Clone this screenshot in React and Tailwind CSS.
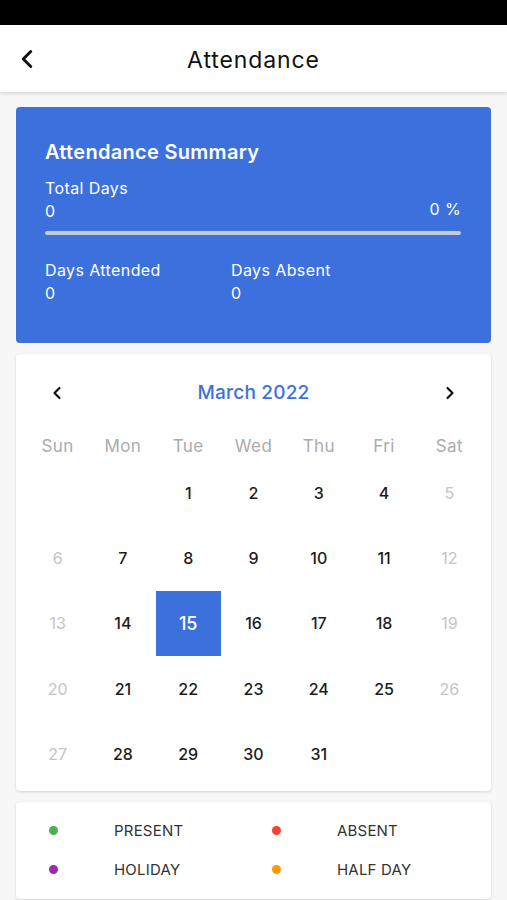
import React from 'react';
import { ChevronLeft, ChevronRight } from 'lucide-react';

const weekdays = ['Sun', 'Mon', 'Tue', 'Wed', 'Thu', 'Fri', 'Sat'];

// March 2022 starts on a Tuesday
const cells = [
  null, null, 1, 2, 3, 4, 5,
  6, 7, 8, 9, 10, 11, 12,
  13, 14, 15, 16, 17, 18, 19,
  20, 21, 22, 23, 24, 25, 26,
  27, 28, 29, 30, 31, null, null,
];

const legend = [
  { label: 'PRESENT', dot: 'bg-[#4caf50]' },
  { label: 'ABSENT', dot: 'bg-[#f44336]' },
  { label: 'HOLIDAY', dot: 'bg-[#9c27b0]' },
  { label: 'HALF DAY', dot: 'bg-[#ff9800]' },
];

export default function App() {
  return (
    <div className="w-[507px] h-[900px] overflow-hidden bg-[#f7f7f7] font-['Inter','Noto_Sans',sans-serif]">
      {/* status bar */}
      <div className="h-[25px] bg-black" />

      {/* header */}
      <div className="relative h-[67px] bg-white flex items-center justify-center shadow-[0_2px_3px_rgba(0,0,0,0.12)]">
        <button className="absolute left-[12px] top-1/2 -translate-y-1/2 text-[#111]">
          <ChevronLeft size={30} strokeWidth={2.3} />
        </button>
        <h1 className="pt-[3px] text-[23px] text-[#111] tracking-[0.9px]">Attendance</h1>
      </div>

      <div className="px-4">
        {/* summary */}
        <div className="mt-[15px] rounded-[4px] bg-[#3c71dd] text-white pt-[32px] pb-[40px] pl-[29px] pr-[30px] tracking-[0.4px]">
          <div className="text-[20px] leading-[26px] font-semibold tracking-[0.3px]">Attendance Summary</div>
          <div className="mt-[13px] text-[16px] leading-[20px]">Total Days</div>
          <div className="mt-[3px] flex items-start justify-between text-[16px] leading-[20px]">
            <span>0</span>
            <span className="-mt-[2px]">0 %</span>
          </div>
          <div className="mt-[10px] h-[4px] rounded-full bg-[#c9cbd2]" />
          <div className="mt-[25px] flex text-[16px] leading-[20px]">
            <div className="w-[186px]">
              <div>Days Attended</div>
              <div className="mt-[3px]">0</div>
            </div>
            <div>
              <div>Days Absent</div>
              <div className="mt-[3px]">0</div>
            </div>
          </div>
        </div>

        {/* calendar */}
        <div className="mt-[11px] rounded-[4px] bg-white shadow-[0_1px_3px_rgba(0,0,0,0.15)] pt-[19px] pb-[5px] px-[9px]">
          <div className="h-[40px] flex items-center justify-between px-[22px]">
            <ChevronLeft size={20} strokeWidth={2.6} className="text-[#111]" />
            <span className="text-[19px] font-medium text-[#3c71dd] tracking-[0.2px]">March 2022</span>
            <ChevronRight size={20} strokeWidth={2.6} className="text-[#111]" />
          </div>
          <div className="mt-[21px] grid grid-cols-7 h-[26px] items-center">
            {weekdays.map((d) => (
              <div key={d} className="text-center text-[17px] text-[#ababab] tracking-[0.4px]">{d}</div>
            ))}
          </div>
          <div className="grid grid-cols-7">
            {cells.map((n, i) => {
              const weekend = i % 7 === 0 || i % 7 === 6;
              const selected = n === 15;
              return (
                <div
                  key={i}
                  className={
                    'h-[65.3px] flex items-center justify-center text-[16px] font-medium ' +
                    (selected
                      ? 'bg-[#3c71dd] text-white text-[18px]'
                      : weekend
                      ? 'text-[#c4c4c4] font-normal'
                      : 'text-[#1c1c1c]')
                  }
                >
                  {n}
                </div>
              );
            })}
          </div>
        </div>

        {/* legend */}
        <div className="mt-[11px] rounded-[4px] bg-white shadow-[0_1px_3px_rgba(0,0,0,0.15)] pt-[9px] pb-[10px] pl-[33px] grid grid-cols-[223px_223px]">
          {legend.map((l) => (
            <div key={l.label} className="h-[39px] flex items-center">
              <span className={'w-[9px] h-[9px] rounded-full ' + l.dot} />
              <span className="ml-[56px] text-[15px] text-[#333] tracking-[0.2px]">{l.label}</span>
            </div>
          ))}
        </div>
      </div>
    </div>
  );
}
